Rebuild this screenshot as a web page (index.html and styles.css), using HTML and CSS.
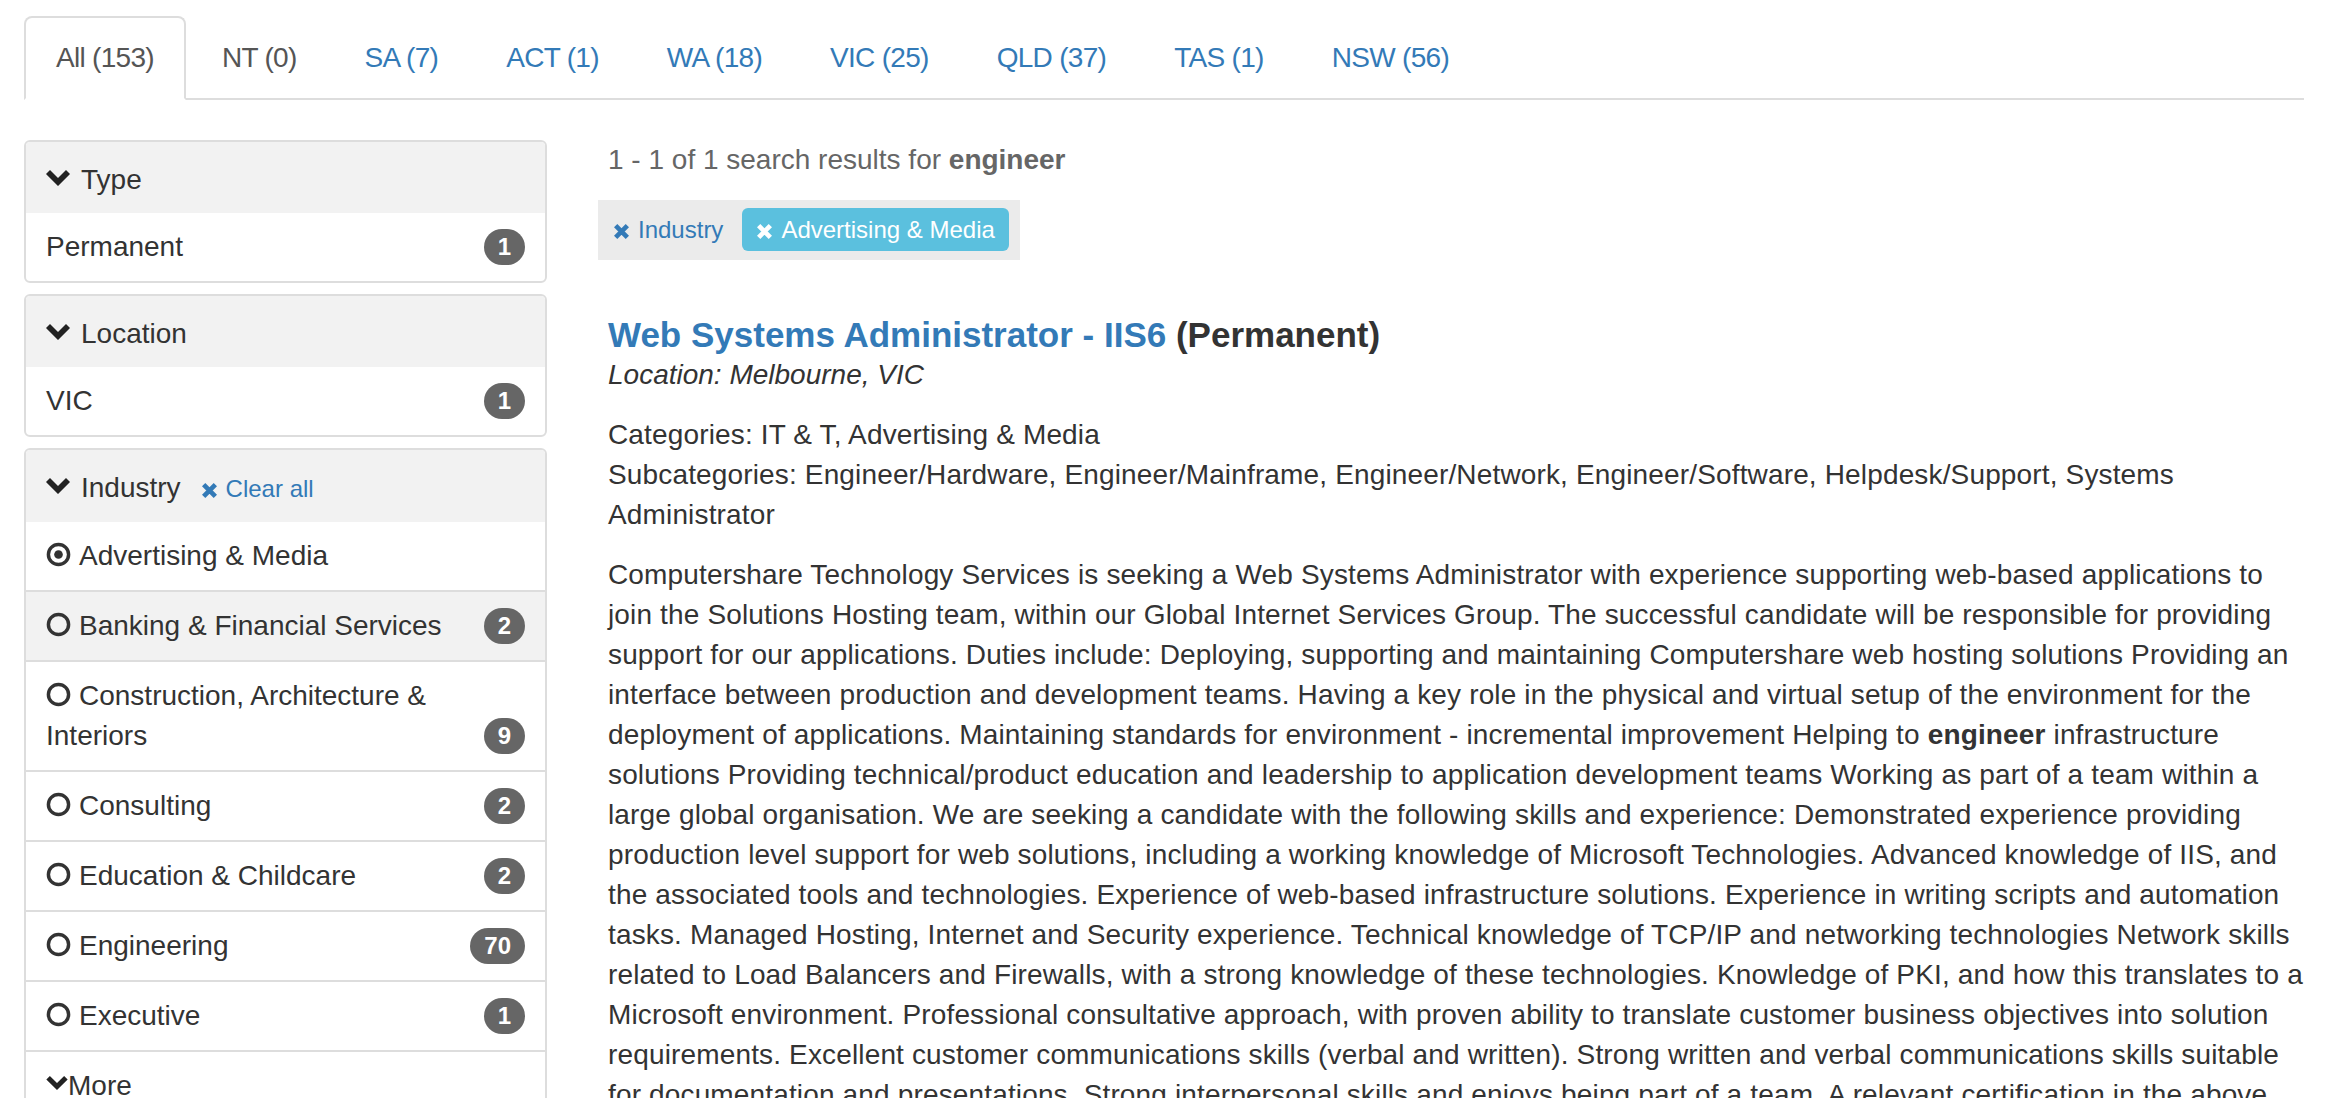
FILE: index.html
```html
<!DOCTYPE html>
<html>
<head>
<meta charset="utf-8">
<title>Search results</title>
<link rel="stylesheet" href="styles.css">
</head>
<body>
<div class="page">
  <ul class="tabs">
    <li class="active"><a>All (153)</a></li>
    <li class="muted"><a>NT (0)</a></li>
    <li><a>SA (7)</a></li>
    <li><a>ACT (1)</a></li>
    <li><a>WA (18)</a></li>
    <li><a>VIC (25)</a></li>
    <li><a>QLD (37)</a></li>
    <li><a>TAS (1)</a></li>
    <li><a>NSW (56)</a></li>
  </ul>

  <div class="content">
    <aside class="sidebar">
      <div class="panel">
        <div class="panel-head"><svg class="chev" viewBox="0 0 24 18"><polygon points="0,5 4,1 12,9 20,1 24,5 12,17"/></svg>Type</div>
        <div class="item">Permanent<span class="badge">1</span></div>
      </div>

      <div class="panel">
        <div class="panel-head"><svg class="chev" viewBox="0 0 24 18"><polygon points="0,5 4,1 12,9 20,1 24,5 12,17"/></svg>Location</div>
        <div class="item">VIC<span class="badge">1</span></div>
      </div>

      <div class="panel">
        <div class="panel-head"><svg class="chev" viewBox="0 0 24 18"><polygon points="0,5 4,1 12,9 20,1 24,5 12,17"/></svg>Industry<a class="clear"><svg class="x" viewBox="0 0 16 16"><path d="M2.5 2.5L13.5 13.5M13.5 2.5L2.5 13.5"/></svg>Clear all</a></div>
        <div class="item"><svg class="radio" viewBox="0 0 26 26"><circle cx="13" cy="13" r="10.5"/><circle class="dot" cx="13" cy="13" r="4.5"/></svg>Advertising &amp; Media</div>
        <div class="item line hover"><svg class="radio" viewBox="0 0 26 26"><circle cx="13" cy="13" r="10.5"/></svg>Banking &amp; Financial Services<span class="badge">2</span></div>
        <div class="item line"><svg class="radio" viewBox="0 0 26 26"><circle cx="13" cy="13" r="10.5"/></svg>Construction, Architecture &amp; Interiors<span class="badge">9</span></div>
        <div class="item line"><svg class="radio" viewBox="0 0 26 26"><circle cx="13" cy="13" r="10.5"/></svg>Consulting<span class="badge">2</span></div>
        <div class="item line"><svg class="radio" viewBox="0 0 26 26"><circle cx="13" cy="13" r="10.5"/></svg>Education &amp; Childcare<span class="badge">2</span></div>
        <div class="item line"><svg class="radio" viewBox="0 0 26 26"><circle cx="13" cy="13" r="10.5"/></svg>Engineering<span class="badge">70</span></div>
        <div class="item line"><svg class="radio" viewBox="0 0 26 26"><circle cx="13" cy="13" r="10.5"/></svg>Executive<span class="badge">1</span></div>
        <div class="item line more"><svg class="chev small" viewBox="0 0 24 18"><polygon points="0,5 4,1 12,9 20,1 24,5 12,17"/></svg>More</div>
      </div>
    </aside>

    <main class="main">
      <p class="count">1 - 1 of 1 search results for <b>engineer</b></p>
      <div class="filters">
        <a class="filter-link"><svg class="x" viewBox="0 0 16 16"><path d="M2.5 2.5L13.5 13.5M13.5 2.5L2.5 13.5"/></svg>Industry</a>
        <span class="label"><svg class="x" viewBox="0 0 16 16"><path d="M2.5 2.5L13.5 13.5M13.5 2.5L2.5 13.5"/></svg>Advertising &amp; Media</span>
      </div>

      <h4 class="job-title"><a>Web Systems Administrator - IIS6</a> (Permanent)</h4>
      <div class="location">Location: Melbourne, VIC</div>

      <p class="cats">Categories: IT &amp; T, Advertising &amp; Media<br>Subcategories: Engineer/Hardware, Engineer/Mainframe, Engineer/Network, Engineer/Software, Helpdesk/Support, Systems Administrator</p>

      <p class="desc">Computershare Technology Services is seeking a Web Systems Administrator with experience supporting web-based applications to join the Solutions Hosting team, within our Global Internet Services Group. The successful candidate will be responsible for providing support for our applications. Duties include: Deploying, supporting and maintaining Computershare web hosting solutions Providing an interface between production and development teams. Having a key role in the physical and virtual setup of the environment for the deployment of applications. Maintaining standards for environment - incremental improvement Helping to <b>engineer</b> infrastructure solutions Providing technical/product education and leadership to application development teams Working as part of a team within a large global organisation. We are seeking a candidate with the following skills and experience: Demonstrated experience providing production level support for web solutions, including a working knowledge of Microsoft Technologies. Advanced knowledge of IIS, and the associated tools and technologies. Experience of web-based infrastructure solutions. Experience in writing scripts and automation tasks. Managed Hosting, Internet and Security experience. Technical knowledge of TCP/IP and networking technologies Network skills related to Load Balancers and Firewalls, with a strong knowledge of these technologies. Knowledge of PKI, and how this translates to a Microsoft environment. Professional consultative approach, with proven ability to translate customer business objectives into solution requirements. Excellent customer communications skills (verbal and written). Strong written and verbal communications skills suitable for documentation and presentations. Strong interpersonal skills and enjoys being part of a team. A relevant certification in the above areas.</p>
    </main>
  </div>
</div>
</body>
</html>
```

FILE: styles.css
```css
* {
  box-sizing: border-box;
}

body {
  margin: 0;
  font-family: "Liberation Sans", Arial, Helvetica, sans-serif;
  font-size: 28px;
  line-height: 40px;
  color: #333;
  background: #fff;
}

.page {
  padding: 16px 40px 0 24px;
}

/* tabs */
.tabs {
  list-style: none;
  margin: 0;
  padding: 0;
  display: flex;
  border-bottom: 2px solid #ddd;
}

.tabs li {
  margin-right: 4px;
  margin-bottom: -2px;
}

.tabs a {
  display: block;
  padding: 20px 30px;
  border: 2px solid transparent;
  border-radius: 8px 8px 0 0;
  color: #337ab7;
  text-decoration: none;
  letter-spacing: -0.7px;
}

.tabs li.active a {
  border-color: #ddd;
  border-bottom-color: #fff;
  background: #fff;
  color: #555;
}

.tabs li.muted a {
  color: #555;
}

/* layout */
.content {
  display: flex;
  margin-top: 40px;
  align-items: flex-start;
}

.sidebar {
  width: 523px;
  flex-shrink: 0;
}

.main {
  flex: 1;
  margin-left: 61px;
  min-width: 0;
}

/* panels */
.panel {
  border: 2px solid #ddd;
  border-radius: 6px;
  margin-bottom: 11px;
  overflow: hidden;
}

.panel-head {
  background: #f2f2f2;
  padding: 18px 20px 13px;
}

.chev {
  width: 24px;
  height: 18px;
  fill: #222;
  margin-right: 11px;
  vertical-align: 2px;
}

.chev.small {
  width: 22px;
  height: 16px;
  margin-right: 0;
  vertical-align: 4px;
}

.clear {
  color: #337ab7;
  font-size: 24px;
  margin-left: 20px;
}

.x {
  width: 17px;
  height: 17px;
  stroke: currentColor;
  stroke-width: 4.4;
  fill: none;
  margin-right: 8px;
  vertical-align: -2px;
}

.item {
  padding: 14px 20px;
}

.item.line {
  border-top: 2px solid #ddd;
}

.item.hover {
  background: #f2f2f2;
}

.radio {
  width: 25px;
  height: 25px;
  margin-right: 8px;
  vertical-align: -2px;
}

.radio circle {
  fill: none;
  stroke: #333;
  stroke-width: 3.6;
}

.radio circle.dot {
  fill: #333;
  stroke: none;
}

.badge {
  float: right;
  background: #666;
  color: #fff;
  font-size: 24px;
  font-weight: bold;
  line-height: 24px;
  padding: 6px 14px;
  border-radius: 20px;
  margin-top: 2px;
}

/* main column */
.count {
  margin: 0;
  color: #666;
}

.filters {
  display: flex;
  align-items: center;
  width: fit-content;
  background: #ebebeb;
  margin: 20px 0 0 -10px;
  padding: 8px 11px 9px 15px;
  font-size: 24px;
  line-height: 31px;
  gap: 19px;
}

.filter-link {
  color: #337ab7;
}

.label {
  background: #5bc0de;
  color: #fff;
  border-radius: 6px;
  padding: 6px 14px;
}

.job-title {
  margin: 55px 0 0;
  font-size: 35px;
  line-height: 40px;
  font-weight: bold;
  color: #333;
}

.job-title a {
  color: #337ab7;
}

.location {
  font-style: italic;
}

.cats {
  margin: 20px 0 0;
  letter-spacing: 0.15px;
}

.desc {
  margin: 20px -8px 0 0;
  letter-spacing: 0.15px;
}
```
